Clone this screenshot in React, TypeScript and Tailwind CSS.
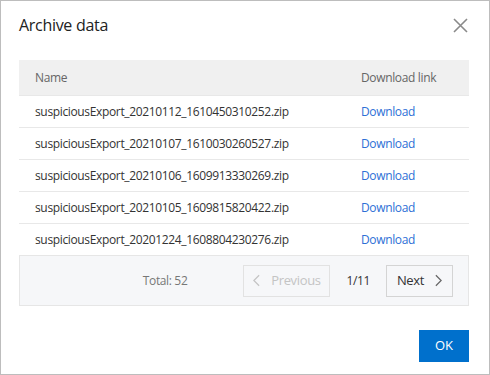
import React from "react";

const files = [
  "suspiciousExport_20210112_1610450310252.zip",
  "suspiciousExport_20210107_1610030260527.zip",
  "suspiciousExport_20210106_1609913330269.zip",
  "suspiciousExport_20210105_1609815820422.zip",
  "suspiciousExport_20201224_1608804230276.zip",
];

const App = () => {
  return (
    <div className="w-[490px] h-[375px] border border-[#bdbdbd] bg-white relative font-['Open_Sans',sans-serif] text-[#333]">
      <div className="h-[59px] pl-[18px] pt-[13px]">
        <h1 className="text-[16px] leading-[22px] text-[#222] tracking-[-0.3px]">Archive data</h1>
      </div>
      <button className="absolute right-[21px] top-[17px] w-[15px] h-[15px] text-[#8a8a8a]">
        <svg viewBox="0 0 15 15" className="w-[15px] h-[15px]" fill="none" stroke="currentColor" strokeWidth="1.6">
          <path d="M1 1 L14 14 M14 1 L1 14" />
        </svg>
      </button>

      <div className="ml-[18px] w-[450px] tracking-[-0.35px]">
        <div className="h-[36px] bg-[#f0f0f0] flex items-center text-[12px] text-[#666] border-b border-[#e8e8e8]">
          <div className="pl-[16px] w-[342px]">Name</div>
          <div>Download link</div>
        </div>
        {files.map((f) => (
          <div key={f} className="h-[32px] flex items-center text-[12px] border-b border-[#e8e8e8]">
            <div className="pl-[16px] w-[342px]">{f}</div>
            <a className="text-[#2d6fd6] cursor-pointer">Download</a>
          </div>
        ))}
        <div className="h-[51px] -mt-px bg-[#f6f7f9] border border-[#e6e6e6] flex items-center justify-end pr-[15px] text-[12px]">
          <span className="text-[#777] mr-[56px]">Total: 52</span>
          <button className="h-[32px] w-[87px] border border-[#e2e2e2] text-[#c4c4c4] flex items-center justify-center gap-[11px] text-[13px]">
            <svg viewBox="0 0 8 14" className="w-[7px] h-[13px]" fill="none" stroke="currentColor" strokeWidth="1.4">
              <path d="M7 1 L1 7 L7 13" />
            </svg>
            Previous
          </button>
          <span className="mx-[16px] text-[#333]">1/11</span>
          <button className="h-[32px] w-[67px] border border-[#d4d4d4] text-[#333] flex items-center justify-center gap-[11px] text-[13px]">
            Next
            <svg viewBox="0 0 8 14" className="w-[7px] h-[13px] text-[#666]" fill="none" stroke="currentColor" strokeWidth="1.4">
              <path d="M1 1 L7 7 L1 13" />
            </svg>
          </button>
        </div>
      </div>

      <div className="flex justify-end pr-[20px] mt-[24px]">
        <button className="w-[50px] h-[32px] bg-[#0070cc] text-white text-[13px]">OK</button>
      </div>
    </div>
  );
};

export default App;
